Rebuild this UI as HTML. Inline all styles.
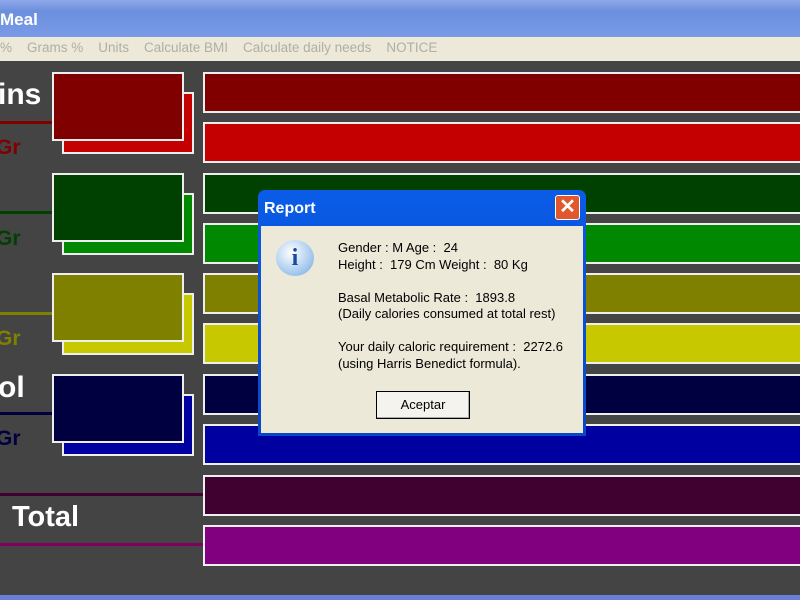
<!DOCTYPE html><html><head><style>
body{margin:0;width:800px;height:600px;overflow:hidden;background:#444;font-family:"Liberation Sans",sans-serif;position:relative}
div{position:absolute;box-sizing:border-box}
.bar{left:203px;width:600px;height:41px;border:2px solid #eee;border-right:none}
.fb{left:52px;width:132px;height:69px;border:2px solid #eee}
.bb{left:62px;width:132px;height:62px;border:2px solid #eee}
.lbl{color:#fff;font-size:30px;font-weight:bold;left:-2px}
.gr{font-size:21px;font-weight:bold;left:-4px}
.ln{left:0;height:3px}
</style></head><body>
<div style="left:0;top:0;width:800px;height:37px;background:linear-gradient(#8fa8e8,#6b8fde 30%,#7a9be6);"></div>
<div style="left:0;top:10px;color:#fff;font-weight:bold;font-size:17px">Meal</div>
<div style="left:0;top:37px;width:800px;height:24px;background:#ece9d8;color:#b0aea6;font-size:13.5px;padding:3px 0 0 0;white-space:pre">%    Grams %    Units    Calculate BMI    Calculate daily needs    NOTICE</div>

<div class="bar" style="top:72px;background:#800000"></div>
<div class="bar" style="top:122px;background:#c40000"></div>
<div class="bb" style="top:92px;background:#c40000"></div>
<div class="fb" style="top:72px;background:#800000"></div>
<div class="ln" style="top:121px;width:52px;background:#800000"></div>
<div class="lbl" style="top:78px">ins</div>
<div class="gr" style="top:136px;color:#800000">Gr</div>

<div class="bar" style="top:173px;background:#004000"></div>
<div class="bar" style="top:223px;background:#008800"></div>
<div class="bb" style="top:193px;background:#008800"></div>
<div class="fb" style="top:173px;background:#004000"></div>
<div class="ln" style="top:211px;width:52px;background:#004000"></div>
<div class="gr" style="top:227px;color:#004000">Gr</div>

<div class="bar" style="top:273px;background:#808000"></div>
<div class="bar" style="top:323px;background:#c8c800"></div>
<div class="bb" style="top:293px;background:#c8c800"></div>
<div class="fb" style="top:273px;background:#808000"></div>
<div class="ln" style="top:312px;width:52px;background:#808000"></div>
<div class="gr" style="top:327px;color:#808000">Gr</div>

<div class="bar" style="top:374px;background:#000040"></div>
<div class="bar" style="top:424px;background:#0000a0"></div>
<div class="bb" style="top:394px;background:#0000a0"></div>
<div class="fb" style="top:374px;background:#000040"></div>
<div class="ln" style="top:412px;width:52px;background:#000040"></div>
<div class="lbl" style="top:371px">ol</div>
<div class="gr" style="top:427px;color:#000040">Gr</div>

<div class="bar" style="top:475px;background:#400030"></div>
<div class="bar" style="top:525px;background:#800080"></div>
<div class="ln" style="top:493px;width:203px;background:#400030"></div>
<div class="ln" style="top:543px;width:203px;background:#800060"></div>
<div class="lbl" style="top:501px;left:12px;font-size:29px">Total</div>
<div style="left:0;top:595px;width:800px;height:5px;background:#6b7fd8"></div>

<div style="left:258px;top:190px;width:328px;height:246px;background:linear-gradient(#0a5ce8,#0a52d8 40%,#0848c8);border-radius:7px 7px 0 0"></div>
<div style="left:264px;top:200px;color:#fff;font-weight:bold;font-size:16px">Report</div>
<div style="left:555px;top:195px;width:25px;height:25px;background:#e0582c;border:1px solid #fff;border-radius:3px;color:#fff;font-size:20px;line-height:22px;text-align:center;font-weight:bold">✕</div>
<div style="left:261px;top:226px;width:322px;height:207px;background:#ece9d8"></div>
<div style="left:276px;top:240px;width:38px;height:36px;border-radius:50%;background:radial-gradient(circle at 40% 35%,#fff,#9bc3ec 70%,#5a8fd0);color:#1a4aa0;font:bold 24px 'Liberation Serif',serif;text-align:center;line-height:36px">i</div>
<div style="left:338px;top:240px;font-size:13px;line-height:16.5px;color:#000;white-space:nowrap">Gender : M Age :&nbsp; 24<br>Height :&nbsp; 179 Cm Weight :&nbsp; 80 Kg<br><br>Basal Metabolic Rate :&nbsp; 1893.8<br>(Daily calories consumed at total rest)<br><br>Your daily caloric requirement :&nbsp; 2272.6<br>(using Harris Benedict formula).</div>
<div style="left:376px;top:391px;width:94px;height:28px;border:1px solid #000;background:#f4f3ee;font-size:13px;text-align:center;line-height:26px;box-shadow:inset -1px -1px #aaa">Aceptar</div>
</body></html>
